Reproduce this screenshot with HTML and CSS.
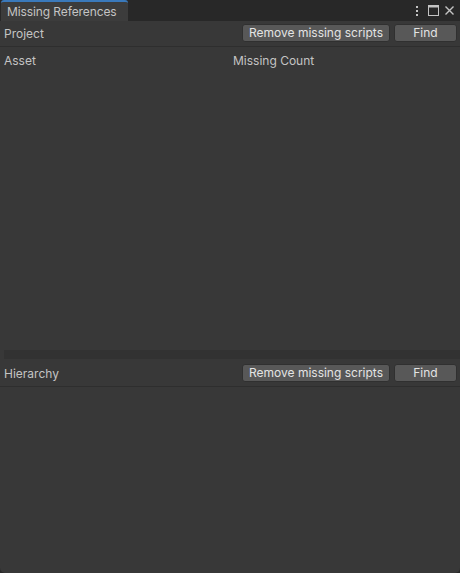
FILE: index.html
```html
<!DOCTYPE html>
<html>
<head>
<meta charset="utf-8">
<link rel="stylesheet" href="styles.css">
</head>
<body>
<div class="window">
  <div class="tabbar">
    <div class="tab">Missing References</div>
    <div class="controls">
      <svg class="ico kebab" width="6" height="12" viewBox="0 0 6 12"><rect x="2" y="1" width="2" height="2" fill="#c4c4c4"/><rect x="2" y="5" width="2" height="2" fill="#c4c4c4"/><rect x="2" y="9" width="2" height="2" fill="#c4c4c4"/></svg>
      <svg class="ico" width="11" height="11" viewBox="0 0 11 11"><rect x="0.5" y="0.5" width="10" height="10" fill="none" stroke="#c4c4c4"/><rect x="0.5" y="0.5" width="10" height="2" fill="#c4c4c4"/></svg>
      <svg class="ico" width="11" height="11" viewBox="0 0 11 11"><path d="M1.5 1.5 L9.5 9.5 M9.5 1.5 L1.5 9.5" stroke="#c4c4c4" stroke-width="1.4" fill="none"/></svg>
    </div>
  </div>
  <div class="toolbar">
    <span class="label">Project</span>
    <div class="buttons">
      <button class="btn btn-wide">Remove missing scripts</button>
      <button class="btn btn-find">Find</button>
    </div>
  </div>
  <div class="sep"></div>
  <div class="list">
    <div class="cols">
      <span class="col col-asset">Asset</span>
      <span class="col">Missing Count</span>
    </div>
  </div>
  <div class="hscroll"></div>
  <div class="toolbar toolbar-h">
    <span class="label">Hierarchy</span>
    <div class="buttons">
      <button class="btn btn-wide">Remove missing scripts</button>
      <button class="btn btn-find">Find</button>
    </div>
  </div>
  <div class="sep"></div>
  <div class="rest"></div>
</div>
</body>
</html>
```
FILE: styles.css
```css
html, body {
  margin: 0;
  padding: 0;
  background: #282828;
}
.window {
  width: 460px;
  height: 573px;
  display: flex;
  flex-direction: column;
  background: #383838;
  font-family: Inter, "Noto Sans", sans-serif;
  font-size: 12px;
  color: #c4c4c4;
  border-radius: 0 0 5px 5px;
  overflow: hidden;
}
.tabbar {
  height: 21px;
  background: #282828;
  display: flex;
  align-items: stretch;
  justify-content: space-between;
  flex-shrink: 0;
}
.tab {
  width: 121px;
  margin-left: 1px;
  padding-left: 6px;
  background: #3c3c3c;
  border-top: 2px solid #3a79bb;
  border-radius: 3px 3px 0 0;
  line-height: 19px;
  color: #c4c4c4;
  letter-spacing: -0.1px;
}
.controls {
  display: flex;
  align-items: center;
  gap: 5px;
  padding-right: 5px;
}
.kebab { margin-right: 3px; }
.ico { display: block; }
.toolbar {
  height: 25px;
  box-sizing: border-box;
  display: flex;
  align-items: center;
  justify-content: space-between;
  padding: 0 3px 1px 4px;
  flex-shrink: 0;
}
.label {
  color: #c4c4c4;
}
.buttons {
  display: flex;
  gap: 4px;
}
.btn {
  font-family: Inter, "Noto Sans", sans-serif;
  font-size: 12px;
  color: #e4e4e4;
  background: #585858;
  border: 1px solid #303030;
  border-radius: 3px;
  height: 18px;
  padding: 0;
  line-height: 16px;
}
.btn-wide { width: 148px; }
.btn-find { width: 63px; }
.sep {
  height: 1px;
  background: #2e2e2e;
  flex-shrink: 0;
}
.list {
  flex: 0 0 303px;
}
.cols {
  display: flex;
  padding: 6px 4px 0;
}
.col-asset { width: 229px; }
.hscroll {
  height: 9px;
  margin-left: 4px;
  background: #323232;
  flex-shrink: 0;
}
.toolbar-h {
  height: 27px;
  padding: 1px 3px 0 4px;
}
.rest { flex: 1; }
```
